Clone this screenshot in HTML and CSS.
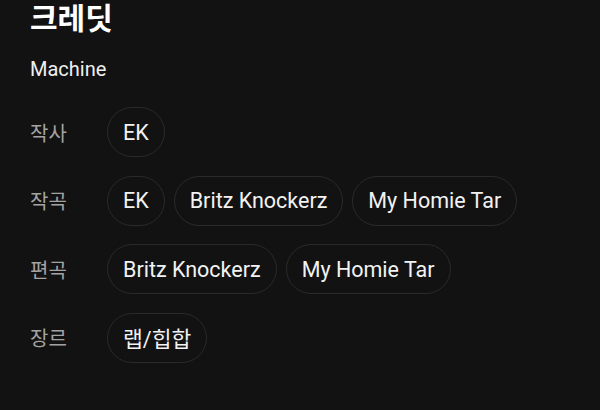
FILE: index.html
```html
<!DOCTYPE html>
<html lang="ko">
<head>
<meta charset="utf-8">
<link rel="stylesheet" href="styles.css">
</head>
<body>
<main class="credits">
  <h1 class="title">크레딧</h1>
  <p class="song">Machine</p>
  <div class="rows">
    <div class="row">
      <span class="label">작사</span>
      <div class="chips">
        <span class="chip">EK</span>
      </div>
    </div>
    <div class="row">
      <span class="label">작곡</span>
      <div class="chips">
        <span class="chip">EK</span>
        <span class="chip">Britz Knockerz</span>
        <span class="chip">My Homie Tar</span>
      </div>
    </div>
    <div class="row">
      <span class="label">편곡</span>
      <div class="chips">
        <span class="chip">Britz Knockerz</span>
        <span class="chip">My Homie Tar</span>
      </div>
    </div>
    <div class="row">
      <span class="label">장르</span>
      <div class="chips">
        <span class="chip">랩/힙합</span>
      </div>
    </div>
  </div>
</main>
</body>
</html>
```
FILE: styles.css
```css
html, body {
  margin: 0;
  padding: 0;
  background: #121212;
}
body {
  font-family: Roboto, "Noto Sans CJK KR", sans-serif;
  color: #f2f2f2;
  width: 600px;
  height: 410px;
  overflow: hidden;
}
.credits {
  padding-left: 30px;
}
.title {
  margin: 0;
  font-size: 30px;
  font-weight: 700;
  line-height: 38px;
  color: #ffffff;
}
.song {
  margin: 19px 0 0;
  font-size: 20px;
  line-height: 24px;
  color: #f0f0f0;
}
.rows {
  margin-top: 26px;
  display: flex;
  flex-direction: column;
  gap: 18.5px;
}
.row {
  display: flex;
  align-items: center;
}
.label {
  width: 77px;
  flex: none;
  font-size: 20px;
  color: #a3a3a3;
}
.chips {
  display: flex;
  gap: 9px;
}
.chip {
  box-sizing: border-box;
  height: 50px;
  padding: 0 15px;
  display: flex;
  align-items: center;
  border: 1px solid #2a2a2a;
  border-radius: 25px;
  font-size: 21.5px;
  color: #f2f2f2;
}
```
